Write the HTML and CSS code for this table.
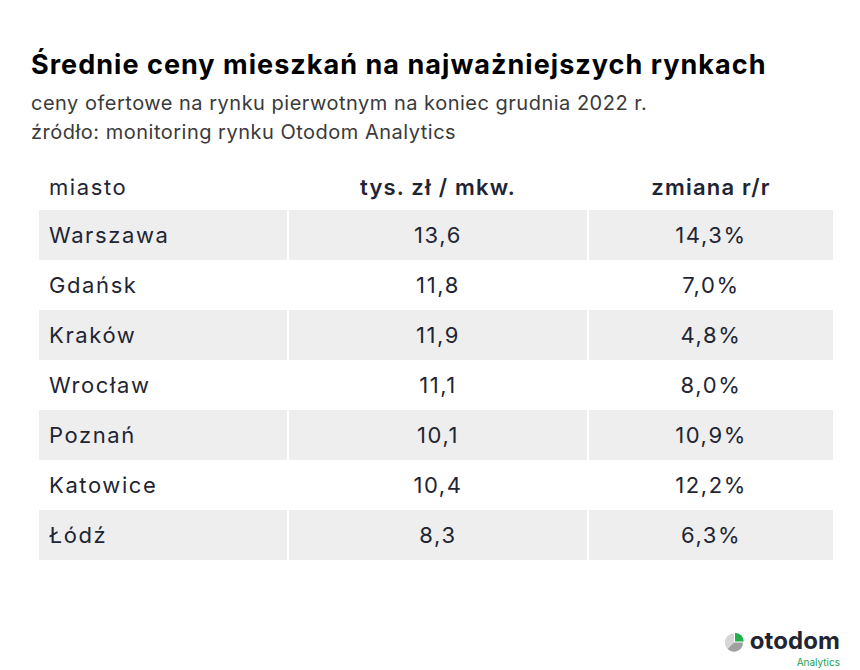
FILE: index.html
```html
<!DOCTYPE html>
<html lang="pl">
<head>
<meta charset="utf-8">
<link rel="stylesheet" href="styles.css">
</head>
<body>
<div class="page">
  <h1 class="title">Średnie ceny mieszkań na najważniejszych rynkach</h1>
  <div class="subs">
    <p class="sub">ceny ofertowe na rynku pierwotnym na koniec grudnia 2022 r.</p>
    <p class="sub">źródło: monitoring rynku Otodom Analytics</p>
  </div>
  <div class="table">
    <div class="row head">
      <div class="c1">miasto</div><div class="c2 b">tys. zł / mkw.</div><div class="c3 b">zmiana r/r</div>
    </div>
    <div class="row g"><div class="c1">Warszawa</div><div class="c2">13,6</div><div class="c3">14,3%</div></div>
    <div class="row"><div class="c1">Gdańsk</div><div class="c2">11,8</div><div class="c3">7,0%</div></div>
    <div class="row g"><div class="c1">Kraków</div><div class="c2">11,9</div><div class="c3">4,8%</div></div>
    <div class="row"><div class="c1">Wrocław</div><div class="c2">11,1</div><div class="c3">8,0%</div></div>
    <div class="row g"><div class="c1">Poznań</div><div class="c2">10,1</div><div class="c3">10,9%</div></div>
    <div class="row"><div class="c1">Katowice</div><div class="c2">10,4</div><div class="c3">12,2%</div></div>
    <div class="row g"><div class="c1">Łódź</div><div class="c2">8,3</div><div class="c3">6,3%</div></div>
  </div>
  <div class="logo">
    <div class="logo-main">
      <svg class="mark" width="19" height="20" viewBox="0 0 19 20">
        <path d="M9 10.5 L9 1.5 A9 9 0 0 0 2.6 16.9 Z" fill="#d6d6d6"/>
        <path d="M9 10.5 L2.6 16.9 A9 9 0 0 0 18 10.5 Z" fill="#a0a0a0"/>
        <path d="M10 9.5 L10 0.8 A8.7 8.7 0 0 1 18.7 9.5 Z" fill="#22b04b"/>
      </svg>
      <span class="brand">otodom</span>
    </div>
    <div class="analytics">Analytics</div>
  </div>
</div>
</body>
</html>
```
FILE: styles.css
```css
html, body { margin: 0; padding: 0; background: #fff; }
.page {
  width: 860px; height: 670px; box-sizing: border-box;
  padding: 46px 27px 0 31px; position: relative;
  font-family: Inter, "Noto Sans", sans-serif; color: #1f2533;
}
.title {
  margin: 0; font-size: 27px; font-weight: 700; color: #000;
  letter-spacing: 1.03px; line-height: 38px;
}
.subs { margin-top: 5px; }
.sub {
  margin: 0; font-size: 20px; color: #3a3a3a; line-height: 29px;
  font-weight: 400; letter-spacing: 0.5px;
}
.table { margin: 16px 0 0 8px; width: 794px; }
.row {
  display: grid; grid-template-columns: 248px 298px 244px; column-gap: 2px;
  height: 50px; align-items: stretch;
}
.row > div {
  display: flex; align-items: center; font-size: 22px; letter-spacing: 1.6px;
}
.row.head { height: 47px; }
.row.head .b { letter-spacing: 1.2px; }
.row.g > div { background: #eeeeee; }
.c1 { padding-left: 10px; }
.c2, .c3 { justify-content: center; }
.b { font-weight: 600; }
.logo {
  position: absolute; right: 20px; bottom: 3px;
  display: flex; flex-direction: column; align-items: flex-end;
}
.logo-main { display: flex; align-items: center; gap: 6px; height: 22px; }
.mark { margin-top: 2px; }
.brand {
  font-size: 24px; font-weight: 700; color: #1f2533;
  letter-spacing: 0.1px; line-height: 20px;
}
.analytics {
  font-size: 10px; color: #22a04b; line-height: 10px; margin-top: 5px;
}
```
